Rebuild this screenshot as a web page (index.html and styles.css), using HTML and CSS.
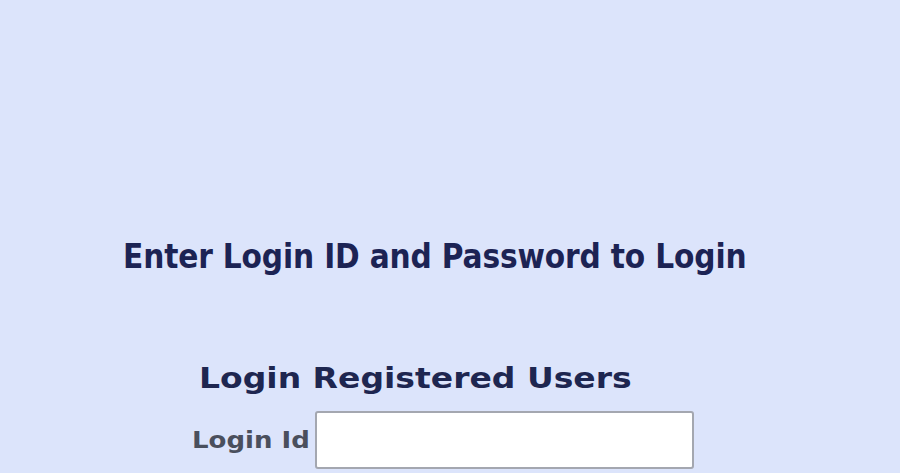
FILE: index.html
```html
<!DOCTYPE html>
<html lang="en">
<head>
<meta charset="utf-8">
<title>Login</title>
<link rel="stylesheet" href="styles.css">
</head>
<body>
<main class="page">
  <h1 class="prompt">Enter Login ID and Password to Login</h1>
  <section class="login">
    <h2 class="login-title">Login Registered Users</h2>
    <div class="field">
      <label class="field-label" for="loginid">Login Id</label>
      <input class="field-input" id="loginid" type="text">
    </div>
  </section>
</main>
</body>
</html>
```

FILE: styles.css
```css
html, body {
  margin: 0;
  padding: 0;
  background: #dce4fb;
}
body {
  width: 900px;
  height: 473px;
  overflow: hidden;
}
.page {
  padding-top: 237px;
}
.prompt {
  margin: 0 0 0 123px;
  font-family: "DejaVu Sans Condensed", "DejaVu Sans", sans-serif;
  font-stretch: condensed;
  font-weight: bold;
  font-size: 33px;
  line-height: 40px;
  letter-spacing: -0.15px;
  color: #1c2354;
  white-space: nowrap;
}
.login {
  margin-top: 84px;
}
.login-title {
  margin: 0 0 0 199px;
  font-family: "DejaVu Sans", sans-serif;
  font-weight: bold;
  font-size: 33px;
  line-height: 34px;
  color: #1e2650;
  white-space: nowrap;
  transform: scaleY(0.88);
  transform-origin: center;
}
.field {
  margin-top: 16px;
  display: flex;
  align-items: center;
}
.field-label {
  margin-left: 192px;
  width: 123px;
  font-family: "DejaVu Sans", sans-serif;
  font-weight: bold;
  font-size: 26px;
  line-height: 30px;
  color: #4a4f5d;
  white-space: nowrap;
  transform: scaleY(0.9);
}
.field-input {
  box-sizing: border-box;
  width: 379px;
  height: 58px;
  margin: 0;
  border: 2px solid #a4a7b0;
  border-radius: 3px;
  background: #ffffff;
}
```
